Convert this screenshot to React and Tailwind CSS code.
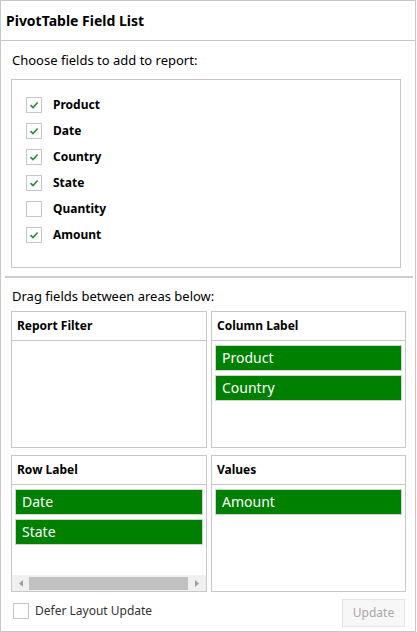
import React from "react";

const font = { fontFamily: '"Segoe UI", "Noto Sans", "Open Sans", sans-serif' };

function Check({ checked }) {
  return (
    <div className="w-[16px] h-[16px] border border-[#c6c6c6] bg-white flex items-center justify-center shrink-0">
      {checked && (
        <svg width="10" height="8" viewBox="0 0 10 8">
          <path d="M1.5 4.2 L4 6.5 L8.6 1.5" fill="none" stroke="#2b8a3e" strokeWidth="1.6" />
        </svg>
      )}
    </div>
  );
}

function Item({ label }) {
  return (
    <div className="h-[26px] bg-[#008000] border border-[#c9d9c9] text-white text-[14px] flex items-center pl-[6px] leading-none">
      {label}
    </div>
  );
}

function Area({ title, items, scroll }) {
  return (
    <div className="border border-[#c8c8c8] h-[137px] flex flex-col bg-white">
      <div className="h-[29px] border-b border-[#c8c8c8] flex items-center pl-[5px] text-[12px] font-bold text-black shrink-0">
        {title}
      </div>
      <div className="flex-1 flex flex-col gap-[4px] px-[3px] pt-[4px]">
        {items.map((i) => (
          <Item key={i} label={i} />
        ))}
      </div>
      {scroll && (
        <div className="h-[16px] bg-[#f0f0f0] flex items-center shrink-0">
          <div className="w-[17px] flex items-center justify-center">
            <svg width="4" height="7" viewBox="0 0 4 7"><path d="M4 0 L0 3.5 L4 7 Z" fill="#a0a0a0" /></svg>
          </div>
          <div className="w-[159px] h-[13px] bg-[#c1c1c1]" />
          <div className="flex-1 flex items-center justify-center">
            <svg width="4" height="7" viewBox="0 0 4 7"><path d="M0 0 L4 3.5 L0 7 Z" fill="#a0a0a0" /></svg>
          </div>
        </div>
      )}
    </div>
  );
}

export default function App() {
  const fields = [
    ["Product", true],
    ["Date", true],
    ["Country", true],
    ["State", true],
    ["Quantity", false],
    ["Amount", true],
  ];
  return (
    <div style={font} className="w-[416px] h-[632px] border border-[#c8c8c8] bg-white flex flex-col text-black">
      <div className="h-[40px] border-b border-[#c8c8c8] flex items-center pl-[5px] text-[14px] font-bold shrink-0">
        PivotTable Field List
      </div>
      <div className="pl-[11px] pt-[10px] text-[13px] leading-[18px] h-[38px]">
        Choose fields to add to report:
      </div>
      <div className="ml-[10px] w-[390px] h-[189px] border border-[#c8c8c8] flex flex-col gap-[10px] pt-[17px] pl-[14px]">
        {fields.map(([f, c]) => (
          <div key={f} className="flex items-center h-[16px]">
            <Check checked={c} />
            <span className="ml-[11px] text-[12px] font-bold">{f}</span>
          </div>
        ))}
      </div>
      <div className="ml-[4px] w-[408px] h-[2px] bg-[#cccccc] mt-[8px]" />
      <div className="pl-[11px] pt-[9px] text-[13px] leading-[18px] h-[33px]">
        Drag fields between areas below:
      </div>
      <div className="ml-[10px] w-[395px] grid grid-cols-[196px_195px] gap-x-[4px] gap-y-[7px]">
        <Area title="Report Filter" items={[]} />
        <Area title="Column Label" items={["Product", "Country"]} />
        <Area title="Row Label" items={["Date", "State"]} scroll />
        <Area title="Values" items={["Amount"]} />
      </div>
      <div className="flex items-start justify-between pl-[12px] pr-[10px] mt-[7px]">
        <div className="flex items-center mt-[3px]">
          <Check checked={false} />
          <span className="ml-[6px] text-[12px] text-[#333]">Defer Layout Update</span>
        </div>
        <div className="w-[63px] h-[28px] border border-[#e3e3e3] bg-[#f7f7f7] text-[12px] text-[#a8a8a8] flex items-center justify-center">
          Update
        </div>
      </div>
    </div>
  );
}
